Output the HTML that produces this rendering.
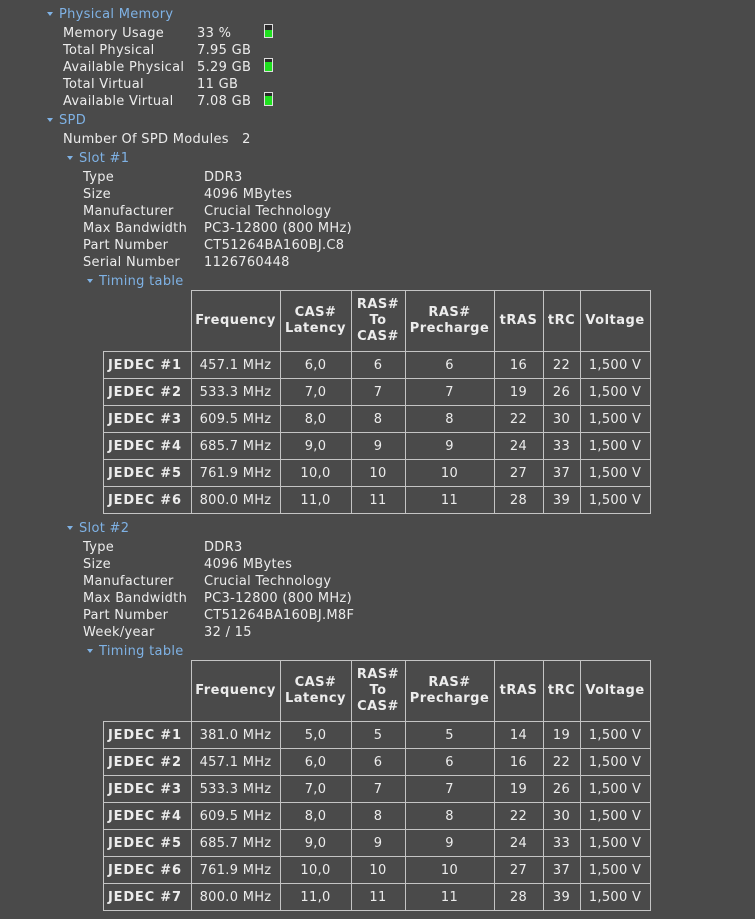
<!DOCTYPE html>
<html><head><meta charset="utf-8"><style>
html,body{margin:0;padding:0;background:#4a4a4a;width:755px;height:919px;overflow:hidden}
body{position:relative;font-family:"DejaVu Sans","Liberation Sans",sans-serif;font-size:13px;color:#ececec;letter-spacing:0.3px}
.t{position:absolute;white-space:nowrap;line-height:17px;margin-top:2px}
.h{color:#7fb2e5}
.tri{position:absolute;width:0;height:0;border-left:3px solid transparent;border-right:3px solid transparent;border-top:4px solid #7fb2e5;margin-top:1px}
.bar{position:absolute;width:9px;height:14px;border:1px solid #ddd;background:#2a2a2a;box-sizing:border-box}
.bar i{position:absolute;left:0;right:0;bottom:0;height:7px;background:#1fe01f}
table{position:absolute;border-collapse:collapse;font-size:13px;color:#ececec}
td{border:1px solid #c4c4c4;text-align:center;padding:0;height:26px}
th{border:1px solid #c4c4c4;text-align:center;padding:0;font-weight:bold;line-height:16px;letter-spacing:0.5px}
td.k{font-weight:bold;text-align:left;padding-left:4px;letter-spacing:0.8px}
th.e{border:none;border-right:1px solid #c4c4c4;border-bottom:1px solid #c4c4c4}
</style></head><body>
<div class="tri" style="left:47px;top:11px"></div><div class="t h" style="left:59px;top:4px">Physical Memory</div>
<div class="t" style="left:63px;top:23px">Memory Usage</div><div class="t" style="left:197px;top:23px">33 %</div><div class="bar" style="left:264px;top:24px"><i></i></div>
<div class="t" style="left:63px;top:40px">Total Physical</div><div class="t" style="left:197px;top:40px">7.95 GB</div>
<div class="t" style="left:63px;top:57px">Available Physical</div><div class="t" style="left:197px;top:57px">5.29 GB</div><div class="bar" style="left:264px;top:58px"><i style="height:9px"></i></div>
<div class="t" style="left:63px;top:74px">Total Virtual</div><div class="t" style="left:197px;top:74px">11 GB</div>
<div class="t" style="left:63px;top:91px">Available Virtual</div><div class="t" style="left:197px;top:91px">7.08 GB</div><div class="bar" style="left:264px;top:92px"><i style="height:9px"></i></div>
<div class="tri" style="left:47px;top:117px"></div><div class="t h" style="left:59px;top:110px">SPD</div>
<div class="t" style="left:63px;top:129px">Number Of SPD Modules&nbsp;&nbsp; 2</div>
<div class="tri" style="left:67px;top:155px"></div><div class="t h" style="left:79px;top:148px">Slot #1</div>
<div class="t" style="left:83px;top:167px">Type</div><div class="t" style="left:204px;top:167px">DDR3</div>
<div class="t" style="left:83px;top:184px">Size</div><div class="t" style="left:204px;top:184px">4096 MBytes</div>
<div class="t" style="left:83px;top:201px">Manufacturer</div><div class="t" style="left:204px;top:201px">Crucial Technology</div>
<div class="t" style="left:83px;top:218px">Max Bandwidth</div><div class="t" style="left:204px;top:218px">PC3-12800 (800 MHz)</div>
<div class="t" style="left:83px;top:235px">Part Number</div><div class="t" style="left:204px;top:235px">CT51264BA160BJ.C8</div>
<div class="t" style="left:83px;top:252px">Serial Number</div><div class="t" style="left:204px;top:252px">1126760448</div>
<div class="tri" style="left:87px;top:278px"></div><div class="t h" style="left:99px;top:271px">Timing table</div>

<table style="left:103px;top:290px">
<tr style="height:61px"><th class="e" style="width:87px"></th><th style="width:88px">Frequency</th><th style="width:70px">CAS#<br>Latency</th><th style="width:53px">RAS#<br>To<br>CAS#</th><th style="width:88px">RAS#<br>Precharge</th><th style="width:48px">tRAS</th><th style="width:36px">tRC</th><th style="width:69px">Voltage</th></tr>
<tr><td class="k">JEDEC #1</td><td>457.1 MHz</td><td>6,0</td><td>6</td><td>6</td><td>16</td><td>22</td><td>1,500 V</td></tr>
<tr><td class="k">JEDEC #2</td><td>533.3 MHz</td><td>7,0</td><td>7</td><td>7</td><td>19</td><td>26</td><td>1,500 V</td></tr>
<tr><td class="k">JEDEC #3</td><td>609.5 MHz</td><td>8,0</td><td>8</td><td>8</td><td>22</td><td>30</td><td>1,500 V</td></tr>
<tr><td class="k">JEDEC #4</td><td>685.7 MHz</td><td>9,0</td><td>9</td><td>9</td><td>24</td><td>33</td><td>1,500 V</td></tr>
<tr><td class="k">JEDEC #5</td><td>761.9 MHz</td><td>10,0</td><td>10</td><td>10</td><td>27</td><td>37</td><td>1,500 V</td></tr>
<tr><td class="k">JEDEC #6</td><td>800.0 MHz</td><td>11,0</td><td>11</td><td>11</td><td>28</td><td>39</td><td>1,500 V</td></tr>
</table>

<div class="tri" style="left:67px;top:525px"></div><div class="t h" style="left:79px;top:518px">Slot #2</div>
<div class="t" style="left:83px;top:537px">Type</div><div class="t" style="left:204px;top:537px">DDR3</div>
<div class="t" style="left:83px;top:554px">Size</div><div class="t" style="left:204px;top:554px">4096 MBytes</div>
<div class="t" style="left:83px;top:571px">Manufacturer</div><div class="t" style="left:204px;top:571px">Crucial Technology</div>
<div class="t" style="left:83px;top:588px">Max Bandwidth</div><div class="t" style="left:204px;top:588px">PC3-12800 (800 MHz)</div>
<div class="t" style="left:83px;top:605px">Part Number</div><div class="t" style="left:204px;top:605px">CT51264BA160BJ.M8F</div>
<div class="t" style="left:83px;top:622px">Week/year</div><div class="t" style="left:204px;top:622px">32 / 15</div>
<div class="tri" style="left:87px;top:648px"></div><div class="t h" style="left:99px;top:641px">Timing table</div>

<table style="left:103px;top:660px">
<tr style="height:61px"><th class="e" style="width:87px"></th><th style="width:88px">Frequency</th><th style="width:70px">CAS#<br>Latency</th><th style="width:53px">RAS#<br>To<br>CAS#</th><th style="width:88px">RAS#<br>Precharge</th><th style="width:48px">tRAS</th><th style="width:36px">tRC</th><th style="width:69px">Voltage</th></tr>
<tr><td class="k">JEDEC #1</td><td>381.0 MHz</td><td>5,0</td><td>5</td><td>5</td><td>14</td><td>19</td><td>1,500 V</td></tr>
<tr><td class="k">JEDEC #2</td><td>457.1 MHz</td><td>6,0</td><td>6</td><td>6</td><td>16</td><td>22</td><td>1,500 V</td></tr>
<tr><td class="k">JEDEC #3</td><td>533.3 MHz</td><td>7,0</td><td>7</td><td>7</td><td>19</td><td>26</td><td>1,500 V</td></tr>
<tr><td class="k">JEDEC #4</td><td>609.5 MHz</td><td>8,0</td><td>8</td><td>8</td><td>22</td><td>30</td><td>1,500 V</td></tr>
<tr><td class="k">JEDEC #5</td><td>685.7 MHz</td><td>9,0</td><td>9</td><td>9</td><td>24</td><td>33</td><td>1,500 V</td></tr>
<tr><td class="k">JEDEC #6</td><td>761.9 MHz</td><td>10,0</td><td>10</td><td>10</td><td>27</td><td>37</td><td>1,500 V</td></tr>
<tr><td class="k">JEDEC #7</td><td>800.0 MHz</td><td>11,0</td><td>11</td><td>11</td><td>28</td><td>39</td><td>1,500 V</td></tr>
</table>
</body></html>
